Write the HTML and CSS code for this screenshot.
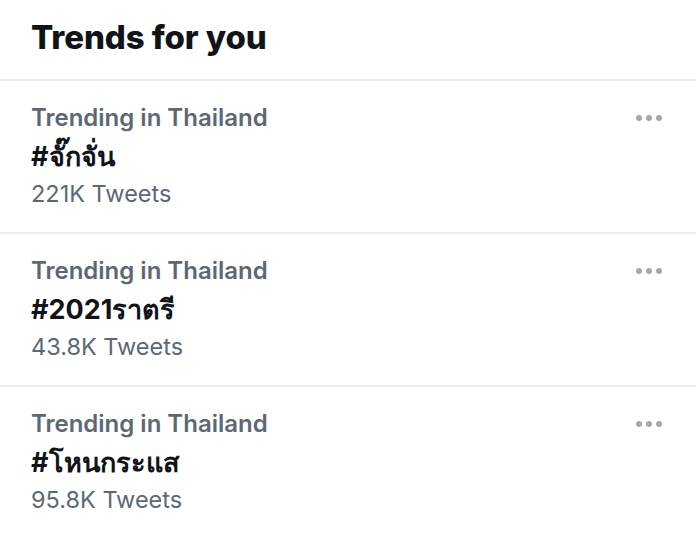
FILE: index.html
```html
<!DOCTYPE html>
<html>
<head>
<meta charset="utf-8">
<link rel="stylesheet" href="styles.css">
</head>
<body>
<div class="panel">
  <div class="header"><h1 class="title">Trends for you</h1></div>
  <div class="trend">
    <div class="info">
      <div class="meta">Trending in Thailand</div>
      <div class="tag">#จั๊กจั่น</div>
      <div class="count">221K Tweets</div>
    </div>
    <div class="more"><span></span><span></span><span></span></div>
  </div>
  <div class="trend">
    <div class="info">
      <div class="meta">Trending in Thailand</div>
      <div class="tag">#2021ราตรี</div>
      <div class="count">43.8K Tweets</div>
    </div>
    <div class="more"><span></span><span></span><span></span></div>
  </div>
  <div class="trend last">
    <div class="info">
      <div class="meta">Trending in Thailand</div>
      <div class="tag">#โหนกระแส</div>
      <div class="count">95.8K Tweets</div>
    </div>
    <div class="more"><span></span><span></span><span></span></div>
  </div>
</div>
</body>
</html>
```
FILE: styles.css
```css
* { box-sizing: border-box; }
html, body { margin: 0; padding: 0; background: #ffffff; }
body { font-family: Inter, "Noto Sans", "DejaVu Sans", sans-serif; width: 696px; height: 538px; overflow: hidden; }
.panel { display: flex; flex-direction: column; }
.header { height: 81px; border-bottom: 2px solid #ebebeb; padding-left: 31px; display: flex; align-items: center; padding-bottom: 6px; }
.title { margin: 0; font-size: 33px; font-weight: 800; color: #0f1419; letter-spacing: -0.1px; }
.trend { height: 153px; border-bottom: 2px solid #ebebeb; display: flex; justify-content: space-between; padding: 22px 34px 0 31px; }
.trend.last { border-bottom: none; }
.info { display: flex; flex-direction: column; }
.meta { font-size: 24px; font-weight: 600; color: #5b6876; line-height: 30px; }
.tag { font-size: 27px; font-weight: 700; color: #0f1419; line-height: 48px; }
.count { font-size: 23.5px; font-weight: 400; color: #5b6876; line-height: 26px; }
.more { display: flex; gap: 4px; padding-top: 12px; }
.more span { width: 6px; height: 6px; border-radius: 50%; background: #a3a8ad; }
```
